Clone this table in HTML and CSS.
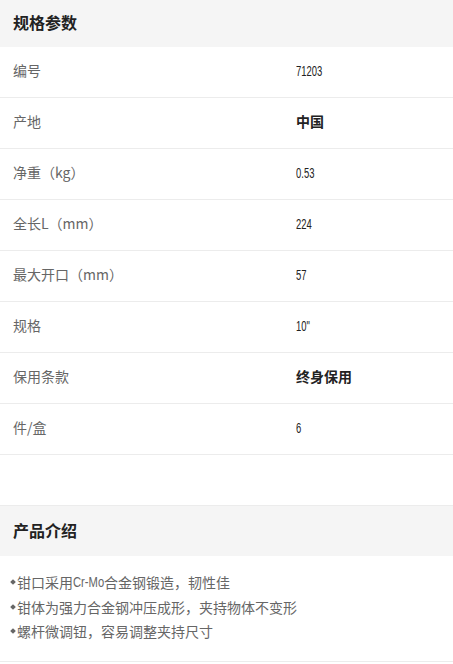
FILE: index.html
```html
<!DOCTYPE html>
<html lang="zh-CN">
<head>
<meta charset="utf-8">
<title>规格参数</title>
<link rel="stylesheet" href="styles.css">
</head>
<body>
<div class="page">
  <div class="sec-head first"><h2>规格参数</h2></div>
  <div class="spec">
    <div class="row"><span class="label">编号</span><span class="val num"><span class="cond">71203</span></span></div>
    <div class="row"><span class="label">产地</span><span class="val bold">中国</span></div>
    <div class="row"><span class="label">净重（kg）</span><span class="val num"><span class="cond">0.53</span></span></div>
    <div class="row"><span class="label">全长L（mm）</span><span class="val num"><span class="cond">224</span></span></div>
    <div class="row"><span class="label">最大开口（mm）</span><span class="val num"><span class="cond">57</span></span></div>
    <div class="row"><span class="label">规格</span><span class="val num"><span class="cond">10"</span></span></div>
    <div class="row"><span class="label">保用条款</span><span class="val bold">终身保用</span></div>
    <div class="row"><span class="label">件/盒</span><span class="val num"><span class="cond">6</span></span></div>
  </div>
  <div class="spacer"></div>
  <div class="sec-head second"><h2>产品介绍</h2></div>
  <ul class="intro">
    <li><i class="dot"></i>钳口采用<span class="cond-in">Cr-Mo</span>合金钢锻造，韧性佳</li>
    <li><i class="dot"></i>钳体为强力合金钢冲压成形，夹持物体不变形</li>
    <li><i class="dot"></i>螺杆微调钮，容易调整夹持尺寸</li>
  </ul>
</div>
</body>
</html>
```
FILE: styles.css
```css
* { box-sizing: border-box; }
html, body { margin: 0; padding: 0; background: #fff; }
body {
  font-family: "Noto Sans CJK SC", "Noto Sans", sans-serif;
  font-size: 14px;
  color: #333;
  width: 453px;
}
.sec-head {
  background: #f5f5f5;
  display: flex;
  align-items: center;
  padding-left: 13px;
}
.sec-head.first { height: 47px; padding-bottom: 3px; }
.sec-head.second { height: 51px; border-top: 1px solid #ececec; padding-bottom: 3px; }
.sec-head h2 {
  margin: 0;
  font-size: 16px;
  font-weight: 700;
  color: #222;
  line-height: 1;
}
.row {
  display: grid;
  grid-template-columns: 283px 1fr;
  align-items: center;
  height: 51px;
  padding-left: 13px;
  padding-bottom: 4px;
  border-bottom: 1px solid #ececec;
}
.label { color: #666; font-size: 14px; line-height: 1; }
.val { color: #222; font-size: 14px; line-height: 1; }
.val.bold { font-weight: 700; }
.cond {
  display: inline-block;
  font-family: "Liberation Sans", sans-serif;
  font-size: 15px;
  transform: scaleX(0.63);
  transform-origin: left center;
}
.spacer { height: 50px; }
.intro {
  list-style: none;
  margin: 0;
  padding: 14px 0 17px 10px;
  border-bottom: 1px solid #ececec;
  color: #666;
  font-size: 14px;
  line-height: 24.5px;
}
.intro li { display: flex; align-items: center; }
.dot {
  display: inline-block;
  width: 4px;
  height: 4px;
  background: #666;
  transform: rotate(45deg);
  margin: 0 2px 0 1px;
  flex: none;
}
.cond-in {
  display: inline-block;
  font-family: "Liberation Sans", sans-serif;
  font-size: 14px;
  transform: scaleX(0.8);
  transform-origin: left center;
  margin-right: -8px;
}
```
